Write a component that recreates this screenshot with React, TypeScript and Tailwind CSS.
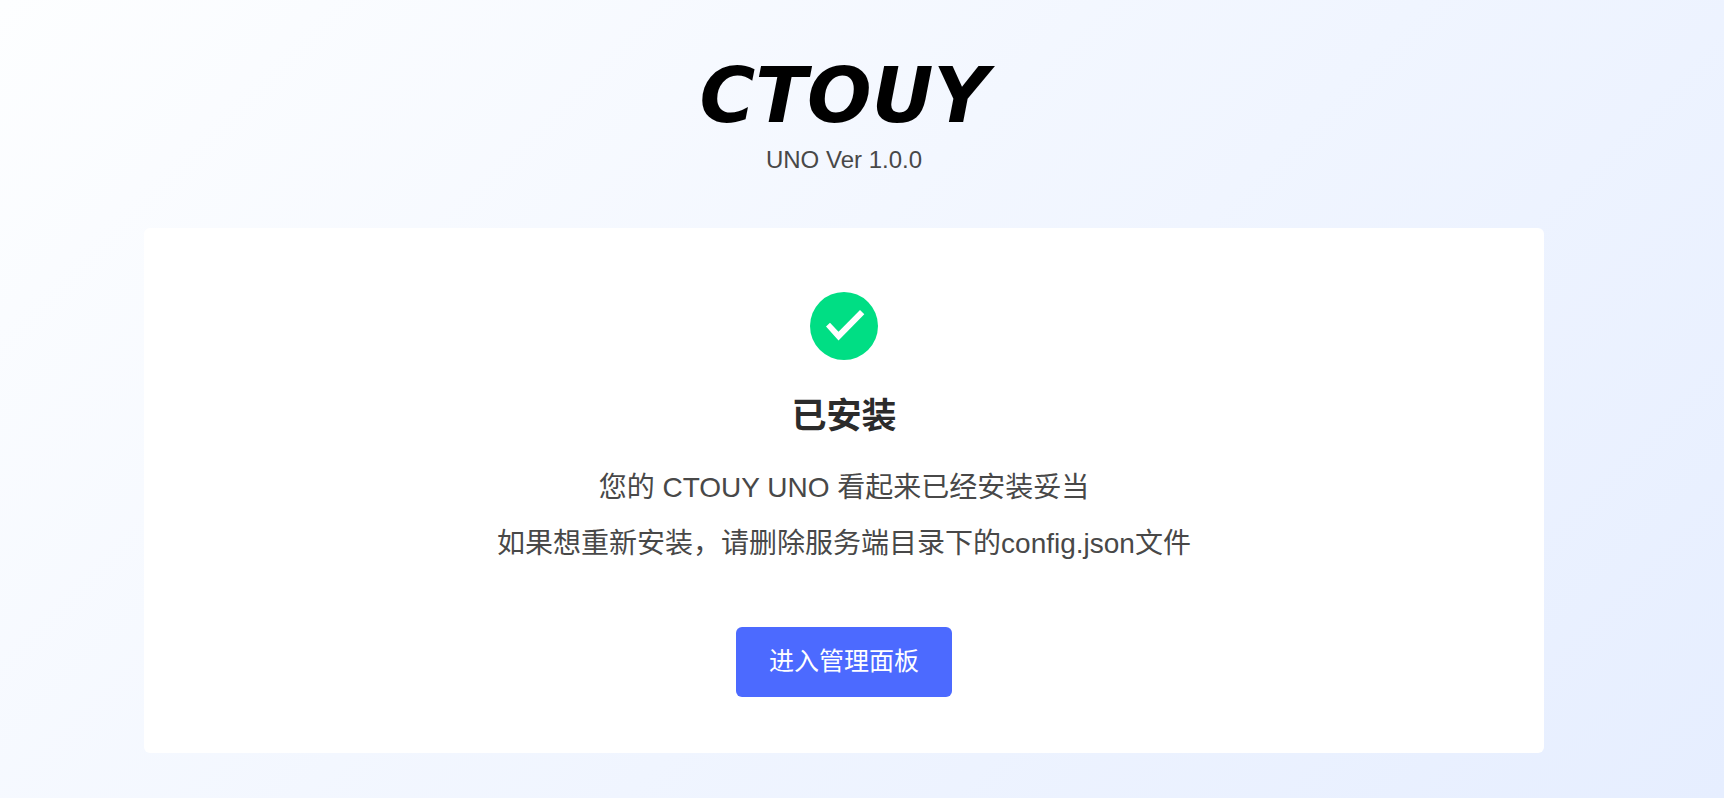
export default function App() {
  return (
    <div className="min-h-screen bg-linear-135 from-[#fdfeff] to-[#e6eeff] pt-[54px] pr-16 pb-11 pl-7 font-['Liberation_Sans','Noto_Sans_CJK_SC',sans-serif] text-[#484848]">
      <div className="mx-auto max-w-[1400px]">
        <header className="flex flex-col items-center">
          <h1 className="font-['DejaVu_Sans',sans-serif] text-[76px] leading-[84px] font-bold text-black italic">CTOUY</h1>
          <p className="mt-1 text-[24px] leading-9">UNO Ver 1.0.0</p>
        </header>
        <main className="mt-[50px] flex flex-col items-center rounded-md bg-white px-8 pt-16 pb-14 text-center">
          <svg className="size-[68px]" viewBox="0 0 68 68" aria-hidden="true">
            <circle cx="34" cy="34" r="34" fill="#00de84" />
            <path d="M16 34.6 20 30.8 28.5 39.8 50 18 54.3 22.2 28.5 48.5Z" fill="#fff" />
          </svg>
          <h2 className="mt-7 text-[35px] leading-[56px] font-bold text-[#2b2b2b]">已安装</h2>
          <div className="mt-4 text-[28px] leading-[56px]">
            <p>您的 CTOUY UNO 看起来已经安装妥当</p>
            <p>如果想重新安装，请删除服务端目录下的config.json文件</p>
          </div>
          <button type="button" className="mt-[55px] h-[70px] cursor-pointer rounded-md bg-[#4c6aff] px-[33px] text-[25px] text-white">
            进入管理面板
          </button>
        </main>
      </div>
    </div>
  );
}
